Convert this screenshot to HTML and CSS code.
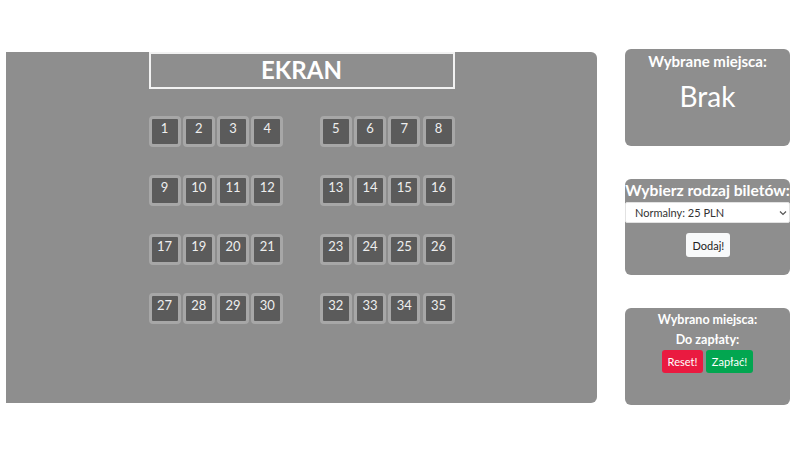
FILE: index.html
```html
<!DOCTYPE html>
<html lang="pl">
<head>
<meta charset="utf-8">
<title>Kino</title>
<link rel="stylesheet" href="styles.css">
</head>
<body>
<div class="page">
  <main class="hall">
    <div class="screen">EKRAN</div>
    <div class="rows">
      <div class="row">
        <div class="seat">1</div><div class="seat">2</div><div class="seat">3</div><div class="seat">4</div>
        <div class="aisle"></div>
        <div class="seat">5</div><div class="seat">6</div><div class="seat">7</div><div class="seat">8</div>
      </div>
      <div class="row">
        <div class="seat">9</div><div class="seat">10</div><div class="seat">11</div><div class="seat">12</div>
        <div class="aisle"></div>
        <div class="seat">13</div><div class="seat">14</div><div class="seat">15</div><div class="seat">16</div>
      </div>
      <div class="row">
        <div class="seat">17</div><div class="seat">19</div><div class="seat">20</div><div class="seat">21</div>
        <div class="aisle"></div>
        <div class="seat">23</div><div class="seat">24</div><div class="seat">25</div><div class="seat">26</div>
      </div>
      <div class="row">
        <div class="seat">27</div><div class="seat">28</div><div class="seat">29</div><div class="seat">30</div>
        <div class="aisle"></div>
        <div class="seat">32</div><div class="seat">33</div><div class="seat">34</div><div class="seat">35</div>
      </div>
    </div>
  </main>
  <aside class="side">
    <section class="panel panel-selected">
      <h2 class="panel-title">Wybrane miejsca:</h2>
      <p class="none">Brak</p>
    </section>
    <section class="panel panel-ticket">
      <h2 class="panel-title big">Wybierz rodzaj biletów:</h2>
      <div class="select-wrap">
        <select class="ticket-select">
          <option>Normalny: 25 PLN</option>
          <option>Ulgowy: 18 PLN</option>
        </select>
        <svg class="chev" width="8" height="6" viewBox="0 0 8 6"><path d="M1 1.5 L4 4.5 L7 1.5" fill="none" stroke="#555" stroke-width="1.2"/></svg>
      </div>
      <div class="center"><button class="btn btn-light">Dodaj!</button></div>
    </section>
    <section class="panel panel-pay">
      <h3 class="pay-line">Wybrano miejsca:</h3>
      <h3 class="pay-line">Do zapłaty:</h3>
      <div class="center btns">
        <button class="btn btn-red">Reset!</button>
        <button class="btn btn-green">Zapłać!</button>
      </div>
    </section>
  </aside>
</div>
</body>
</html>
```

FILE: styles.css
```css
* { box-sizing: border-box; }
html, body {
  margin: 0;
  padding: 0;
  background: #ffffff;
  font-family: Lato, "Open Sans", "Liberation Sans", sans-serif;
  color: #ffffff;
}
.page {
  display: flex;
  align-items: flex-start;
  padding: 49px 10px 0 6px;
  gap: 28px;
}
.hall {
  width: 591px;
  height: 351px;
  margin-top: 3px;
  background: #8e8e8e;
  border-radius: 0 6px 6px 0;
  display: flex;
  flex-direction: column;
  align-items: center;
}
.screen {
  width: 306px;
  height: 37px;
  border: 2px solid #f2f2f2;
  text-align: center;
  font-weight: 700;
  font-size: 24px;
  line-height: 31px;
}
.rows {
  margin-top: 27px;
  display: flex;
  flex-direction: column;
  gap: 28px;
}
.row {
  display: grid;
  grid-template-columns: repeat(9, 32px);
  column-gap: 2.25px;
}
.seat {
  width: 32px;
  height: 31px;
  border: 3px solid #a7a7a7;
  border-radius: 4px;
  background: #5b5b5b;
  color: #eeeeee;
  font-size: 13px;
  line-height: 19px;
  text-align: center;
}
.side {
  width: 165px;
  display: flex;
  flex-direction: column;
  gap: 33px;
}
.panel {
  background: #8e8e8e;
  border-radius: 6px;
  height: 97px;
}
.panel-ticket { height: 96px; }
.panel-title {
  margin: 0;
  padding-top: 2px;
  text-align: center;
  font-size: 15px;
  font-weight: 700;
  line-height: 20px;
}
.panel-title.big {
  font-size: 15.6px;
  line-height: 22px;
  padding-top: 0;
  white-space: nowrap;
}
.none {
  margin: 7px 0 0;
  text-align: center;
  font-size: 28px;
  line-height: 36px;
}
.select-wrap {
  position: relative;
  margin-top: 1px;
}
.ticket-select {
  display: block;
  width: 100%;
  height: 21px;
  appearance: none;
  -webkit-appearance: none;
  border: 1px solid #e2e2e2;
  border-radius: 2px;
  background: #ffffff;
  color: #333333;
  font-family: inherit;
  font-size: 11px;
  padding: 0 0 0 9px;
}
.chev {
  position: absolute;
  right: 3px;
  top: 8px;
}
.center {
  display: flex;
  justify-content: center;
}
.panel-ticket .center { margin-top: 10px; }
.btn {
  font-family: inherit;
  font-size: 11px;
  height: 24px;
  border: none;
  border-radius: 3px;
  padding: 0 7px;
  cursor: pointer;
}
.btn-light {
  background: #f8f9fa;
  color: #222222;
  width: 44px;
}
.pay-line {
  margin: 0;
  text-align: center;
  font-size: 12.5px;
  font-weight: 700;
  line-height: 20px;
}
.pay-line:first-child { padding-top: 2px; }
.btns {
  gap: 3px;
  margin-top: 0;
}
.btn-red {
  background: #ea1a40;
  color: #ffffff;
  width: 41px;
  height: 23px;
  padding: 0;
}
.btn-green {
  background: #02a650;
  color: #ffffff;
  width: 47px;
  height: 23px;
  padding: 0;
}
```
